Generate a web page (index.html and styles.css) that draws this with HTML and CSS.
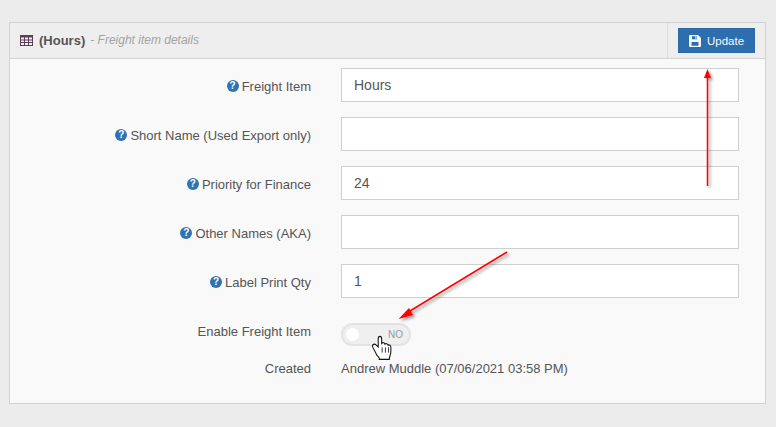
FILE: index.html
```html
<!DOCTYPE html>
<html lang="en">
<head>
<meta charset="utf-8">
<title>Freight item details</title>
<link rel="stylesheet" href="styles.css">
</head>
<body>
<section class="panel">
  <header class="panel-head">
    <div class="panel-title">
      <svg class="table-icon" width="13" height="11" viewBox="0 0 13 11"><path fill="#5b3f55" d="M0 0h13v11H0z"/><path fill="#f6f0f4" d="M1 2.500h3v2H1zM5 2.500h3v2H5zM9 2.500h3v2H9zM1 5.500h3v1.500H1zM5 5.500h3v1.500H5zM9 5.500h3v1.500H9zM1 8h3v2H1zM5 8h3v2H5zM9 8h3v2H9z"/></svg>
      <strong class="title-main">(Hours)</strong>
      <span class="title-sub">- Freight item details</span>
    </div>
    <div class="panel-actions">
      <button class="btn-update" type="button">
        <svg width="12" height="12" viewBox="0 0 12 12"><path fill="#f4f8fb" d="M0 1a1 1 0 0 1 1-1h8l3 3v8a1 1 0 0 1-1 1H1a1 1 0 0 1-1-1z"/><path fill="#2d6fae" d="M3 1.200h5v3H3zM2.500 7h7v3.800h-7z"/><path fill="#f4f8fb" d="M6.300 1.600h1.200v2.200H6.300z"/></svg>
        <span>Update</span>
      </button>
    </div>
  </header>
  <div class="panel-body">
    <div class="row">
      <label class="label"><span class="help">?</span>Freight Item</label>
      <div class="input">Hours</div>
    </div>
    <div class="row">
      <label class="label"><span class="help">?</span>Short Name (Used Export only)</label>
      <div class="input"></div>
    </div>
    <div class="row">
      <label class="label"><span class="help">?</span>Priority for Finance</label>
      <div class="input">24</div>
    </div>
    <div class="row">
      <label class="label"><span class="help">?</span>Other Names (AKA)</label>
      <div class="input"></div>
    </div>
    <div class="row">
      <label class="label"><span class="help">?</span>Label Print Qty</label>
      <div class="input">1</div>
    </div>
    <div class="row row-toggle">
      <label class="label">Enable Freight Item</label>
      <div class="toggle"><span class="knob"></span><span class="toggle-text">NO</span></div>
    </div>
    <div class="row row-created">
      <label class="label">Created</label>
      <div class="static">Andrew Muddle (07/06/2021 03:58 PM)</div>
    </div>
  </div>
</section>
<svg class="overlay" width="776" height="427" viewBox="0 0 776 427">
  <defs>
    <filter id="sh" x="-30%" y="-30%" width="160%" height="160%"><feDropShadow dx="2" dy="2" stdDeviation="1.500" flood-color="#000" flood-opacity=".4"/></filter>
  </defs>
  <g filter="url(#sh)" fill="#f00" stroke="#f00">
    <path d="M707.500 186V76" stroke-width="1.500" fill="none"/>
    <path d="M707.500 69l3.500 9h-7z" stroke="none"/>
    <path d="M507 252L405 314" stroke-width="1.500" fill="none"/>
    <path d="M398.500 319L409 308l4 7z" stroke="none"/>
  </g>
  <g transform="translate(380 338) scale(1.180 1.330) translate(-382.500 -338)">
    <path d="M379.500 350.500c-.5-2-3.400-5-3.400-6.500 0-1.300 1.900-1.800 3-.8l1.900 1.600v-6.300c0-2.300 2.900-2.300 2.900 0v3.500c.8-.7 2.500-.7 2.800.6.800-.6 2.300-.4 2.600.8.900-.5 2.400 0 2.400 1.500v3.400c0 1.800-.9 3.200-1.300 4.700v1h-8.500v-.9c-.8-1-1.700-1.800-2.400-2.600z" fill="#fff" stroke="#111" stroke-width=".9"/>
    <path d="M384.300 345v4M387.100 345v4M389.700 345v4" stroke="#111" stroke-width=".65" fill="none"/>
  </g>
</svg>
</body>
</html>
```
FILE: styles.css
```css
* { box-sizing: border-box; }
html, body { margin: 0; padding: 0; }
body {
  width: 776px;
  height: 427px;
  overflow: hidden;
  background: #ececec;
  font-family: "Liberation Sans", Arial, sans-serif;
  font-size: 14px;
  color: #555;
  padding: 22px 10px 0 9px;
  position: relative;
}
.panel {
  width: 757px;
  height: 382px;
  border: 1px solid #d2d2d2;
  background: #f9f9f9;
}
.panel-head {
  height: 36px;
  display: flex;
  justify-content: space-between;
  border-bottom: 1px solid #d2d2d2;
  background: #eeeeee;
}
.panel-title {
  display: flex;
  align-items: center;
  padding-left: 10px;
  padding-bottom: 1px;
}
.table-icon { margin-right: 6px; }
.title-main { font-size: 13px; color: #555; margin-right: 5px; }
.title-sub { font-size: 12px; font-style: italic; color: #a3a3a3; }
.panel-actions {
  width: 98px;
  border-left: 1px solid #dcdcdc;
  padding: 5px 0 0 10px;
}
.btn-update {
  width: 77px;
  height: 25px;
  padding: 0;
  border: 1px solid #2b6aa5;
  background: #2d6fae;
  color: #f4f8fb;
  font-family: inherit;
  font-size: 11.500px;
  display: flex;
  align-items: center;
  justify-content: center;
  gap: 6px;
}
.panel-body { padding-top: 9px; }
.row {
  display: flex;
  align-items: center;
  height: 34px;
  margin-bottom: 15px;
}
.label {
  width: 301px;
  display: flex;
  align-items: center;
  justify-content: flex-end;
  font-size: 13px;
  color: #555;
  margin-right: 30px;
  padding-top: 2px;
}
.help {
  width: 12px;
  height: 12px;
  border-radius: 50%;
  background: #2f74b2;
  color: #fff;
  font-size: 10px;
  font-weight: bold;
  line-height: 12px;
  text-align: center;
  margin-right: 3px;
}
.input {
  width: 398px;
  height: 34px;
  border: 1px solid #cfcfcf;
  background: #fff;
  padding: 0 12px;
  font-size: 14px;
  line-height: 33px;
  color: #555;
}
.row-toggle { height: 23px; margin: 25px 0 0; }
.row-toggle .label { padding: 0 0 7px; }
.toggle {
  width: 70px;
  height: 23px;
  border-radius: 12px;
  background: #efefef;
  border: 2px solid #e3e3e3;
  display: flex;
  align-items: center;
  justify-content: space-between;
  padding: 0 6px 0 3px;
}
.knob { width: 13px; height: 13px; border-radius: 50%; background: #fff; }
.toggle-text { font-size: 10px; font-weight: normal; color: #999; }
.row-created { height: 18px; margin: 13px 0 0; }
.row-created .label { padding: 0; }
.static { font-size: 13px; color: #555; padding-top: 1px; }
.overlay { position: absolute; left: 0; top: 0; pointer-events: none; }
```
